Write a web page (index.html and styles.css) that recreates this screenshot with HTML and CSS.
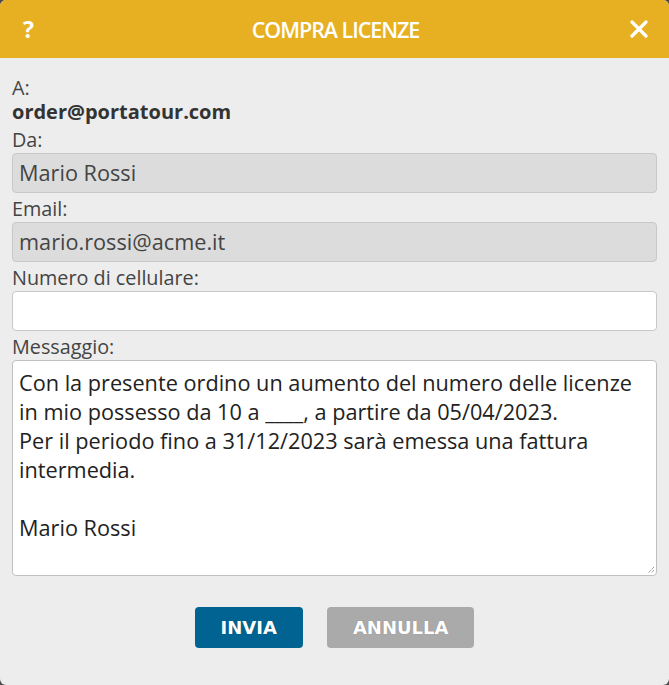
FILE: index.html
```html
<!DOCTYPE html>
<html lang="it">
<head>
<meta charset="utf-8">
<title>Compra licenze</title>
<link rel="stylesheet" href="styles.css">
</head>
<body>
<div class="dialog">
  <div class="header">
    <span class="help">?</span>
    <span class="title">COMPRA LICENZE</span>
    <svg class="close" width="18" height="18" viewBox="0 0 18 18"><path d="M2 2 L16 16 M16 2 L2 16" stroke="#fff" stroke-width="3.2" stroke-linecap="round"/></svg>
  </div>
  <div class="body">
    <div class="label">A:</div>
    <div class="to">order@portatour.com</div>
    <div class="field">
      <div class="label">Da:</div>
      <div class="input disabled">Mario Rossi</div>
    </div>
    <div class="field">
      <div class="label">Email:</div>
      <div class="input disabled">mario.rossi@acme.it</div>
    </div>
    <div class="field">
      <div class="label">Numero di cellulare:</div>
      <div class="input"></div>
    </div>
    <div class="field">
      <div class="label">Messaggio:</div>
      <div class="textarea">Con la presente ordino un aumento del numero delle licenze in mio possesso da 10 a ____, a partire da 05/04/2023.<br>Per il periodo fino a 31/12/2023 sarà emessa una fattura intermedia.<br><br>Mario Rossi<svg class="grip" width="8" height="8" viewBox="0 0 8 8"><path d="M7 1 L1 7 M7 4 L4 7" stroke="#777" stroke-width="1" stroke-dasharray="1 1"/></svg></div>
    </div>
    <div class="buttons">
      <button class="btn primary">INVIA</button>
      <button class="btn secondary">ANNULLA</button>
    </div>
  </div>
</div>
</body>
</html>
```

FILE: styles.css
```css
html, body {
  margin: 0;
  padding: 0;
  background: #4a4a4a;
}
.dialog {
  width: 669px;
  height: 685px;
  background: #ededed;
  border-radius: 6px;
  overflow: hidden;
  display: flex;
  flex-direction: column;
  font-family: "Open Sans", sans-serif;
}
.header {
  height: 58px;
  flex: none;
  background: #e6b022;
  display: flex;
  align-items: center;
  justify-content: space-between;
  padding: 0 21px 0 23px;
  color: #fff;
}
.help {
  font-weight: 700;
  font-size: 23px;
  width: 18px;
  line-height: 1;
}
.title {
  font-weight: 600;
  font-size: 21.5px;
  letter-spacing: -1.05px;
}
.close {
  display: block;
}
.body {
  padding: 18px 12px 0 12px;
  color: #444;
}
.label {
  font-size: 19.8px;
  line-height: 24px;
  color: #444;
}
.to {
  font-size: 20px;
  line-height: 23px;
  font-weight: 700;
  color: #333;
}
.field {
  margin-top: 5px;
}
.field + .field {
  margin-top: 4px;
}
.input {
  margin-top: 1px;
  height: 40px;
  box-sizing: border-box;
  border: 1px solid #c8c8c8;
  border-radius: 4px;
  background: #fff;
  font-size: 21.7px;
  line-height: 38px;
  padding: 0 6px;
  color: #444;
}
.input.disabled {
  background: #dcdcdc;
}
.textarea {
  position: relative;
  margin-top: 1px;
  height: 216px;
  box-sizing: border-box;
  border: 1px solid #c0c0c0;
  border-radius: 4px;
  background: #fff;
  font-size: 21.7px;
  line-height: 29px;
  padding: 7px 6px;
  color: #222;
}
.grip {
  position: absolute;
  right: 1px;
  bottom: 1px;
}
.buttons {
  display: flex;
  justify-content: center;
  gap: 24px;
  margin-top: 31px;
}
.btn {
  height: 41px;
  border: none;
  border-radius: 4px;
  color: #fff;
  font-family: "DejaVu Sans", Verdana, sans-serif;
  font-weight: 700;
  font-size: 18px;
  padding: 0 26px;
  text-shadow: 0 0 1px rgba(0,0,0,0.25);
}
.primary {
  background: #016392;
}
.secondary {
  background: #aaaaaa;
}
```
